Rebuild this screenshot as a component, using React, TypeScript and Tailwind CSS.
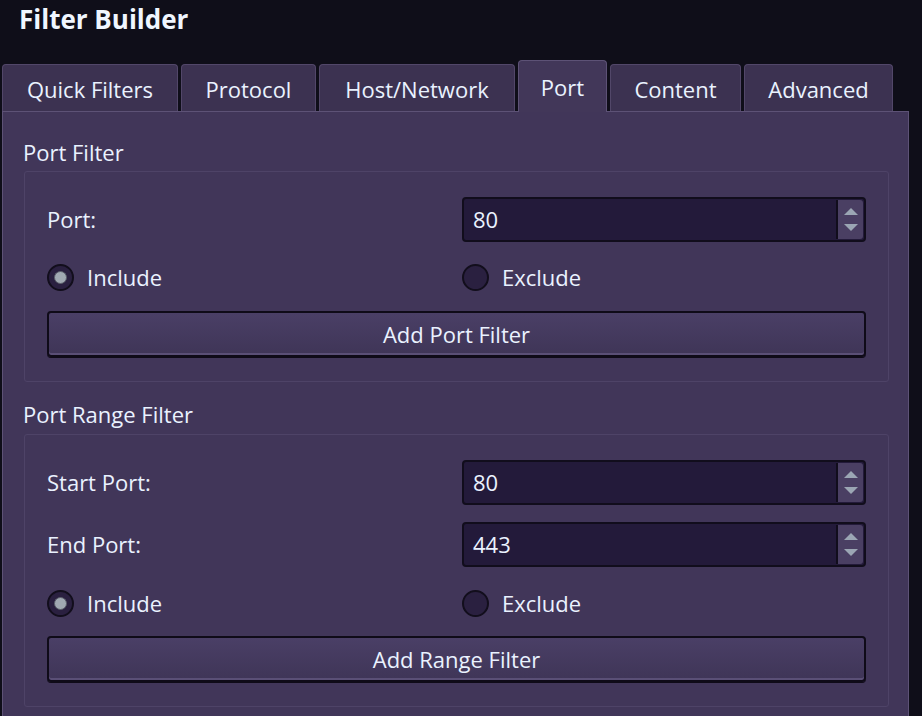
import React from "react";

const font = { fontFamily: '"Open Sans", "Noto Sans", sans-serif' };

function Tab({ label, w, selected }: { label: string; w: number; selected?: boolean }) {
  return (
    <div
      style={{ width: w }}
      className={
        selected
          ? "relative z-10 -mb-px flex h-[52px] items-center justify-center rounded-t-[4px] border border-b-0 border-[#5d5276] bg-[#423759] pt-[1px] text-[22px] text-[#eaf2ff]"
          : "flex h-[47px] items-center justify-center rounded-t-[4px] border border-b-0 border-[#524769] bg-[#3c3251] pt-[3px] text-[22px] text-[#eaf2ff]"
      }
    >
      {label}
    </div>
  );
}

function Spin({ value }: { value: string }) {
  return (
    <div className="flex h-[45px] flex-1 items-stretch rounded-[4px] border-2 border-[#110d1c] bg-[#231a3a]">
      <div className="flex flex-1 items-center pl-[9px] text-[22px] text-[#eaf2ff]">{value}</div>
      <div className="my-[1px] mr-[1px] flex w-[27px] flex-col items-center justify-center gap-[9px] rounded-r-[3px] border-l-2 border-[#110d1c] bg-[#4a3f63]">
        <svg width="14" height="7" viewBox="0 0 14 7">
          <polygon points="7,0 14,7 0,7" fill="#9ba6b4" />
        </svg>
        <svg width="14" height="7" viewBox="0 0 14 7">
          <polygon points="0,0 14,0 7,7" fill="#9ba6b4" />
        </svg>
      </div>
    </div>
  );
}

function Radio({ label, checked }: { label: string; checked?: boolean }) {
  return (
    <div className="flex items-center gap-[13px]">
      <div className="flex h-[27px] w-[27px] items-center justify-center rounded-full border-2 border-[#120e1c] bg-[#2a2040]">
        {checked && <div className="h-[13px] w-[13px] rounded-full border border-[#5a5e6a] bg-[#a0a9b2]" />}
      </div>
      <span className="text-[22px] text-[#eaf2ff]">{label}</span>
    </div>
  );
}

function Button({ label }: { label: string }) {
  return (
    <div className="flex h-[46px] items-center justify-center rounded-[4px] border-2 border-[#0f0b18] bg-gradient-to-b from-[#4a3f66] to-[#3f3557] shadow-[inset_0_-2px_0_#5a4f76,0_1px_0_#0f0b18] text-[22px] text-[#eaf2ff]">
      <span>{label}</span>
    </div>
  );
}

function Row({ label, children }: { label: string; children: React.ReactNode }) {
  return (
    <div className="flex items-center">
      <div className="w-[415px] text-[22px] text-[#eaf2ff]">{label}</div>
      {children}
    </div>
  );
}

function RadioRow() {
  return (
    <div className="flex h-[30px] items-center">
      <div className="w-[415px]">
        <Radio label="Include" checked />
      </div>
      <Radio label="Exclude" />
    </div>
  );
}

export default function App() {
  return (
    <div style={font} className="h-[716px] w-[922px] overflow-hidden bg-[#0f0e19]">
      <div className="flex h-[38px] items-center pl-[19px] pt-[1px] text-[26px] font-bold text-[#f0f6ff]">
        Filter Builder
      </div>
      <div className="flex h-[73px] items-end gap-[3px] pl-[2px]">
        <Tab label="Quick Filters" w={176} />
        <Tab label="Protocol" w={135} />
        <Tab label="Host/Network" w={196} />
        <Tab label="Port" w={89} selected />
        <Tab label="Content" w={131} />
        <Tab label="Advanced" w={149} />
      </div>
      <div className="ml-[2px] h-[640px] w-[907px] border border-[#5d5276] bg-[#413659] pl-[20px] pr-[19px] pt-[26px]">
        <div className="flex h-[28px] items-center text-[22px] text-[#eaf2ff]">Port Filter</div>
        <div className="ml-[1px] mt-[5px] rounded-[3px] border border-[#4e4367] pb-[24px] pl-[22px] pr-[22px] pt-[25px]">
          <Row label="Port:">
            <Spin value="80" />
          </Row>
          <div className="mt-[20px]">
            <RadioRow />
          </div>
          <div className="mt-[19px]">
            <Button label="Add Port Filter" />
          </div>
        </div>
        <div className="mt-[18px] flex h-[28px] items-center text-[22px] text-[#eaf2ff]">Port Range Filter</div>
        <div className="ml-[1px] mt-[6px] rounded-[3px] border border-[#4e4367] pb-[24px] pl-[22px] pr-[22px] pt-[25px]">
          <Row label="Start Port:">
            <Spin value="80" />
          </Row>
          <div className="mt-[17px]">
            <Row label="End Port:">
              <Spin value="443" />
            </Row>
          </div>
          <div className="mt-[21px]">
            <RadioRow />
          </div>
          <div className="mt-[18px]">
            <Button label="Add Range Filter" />
          </div>
        </div>
      </div>
    </div>
  );
}
